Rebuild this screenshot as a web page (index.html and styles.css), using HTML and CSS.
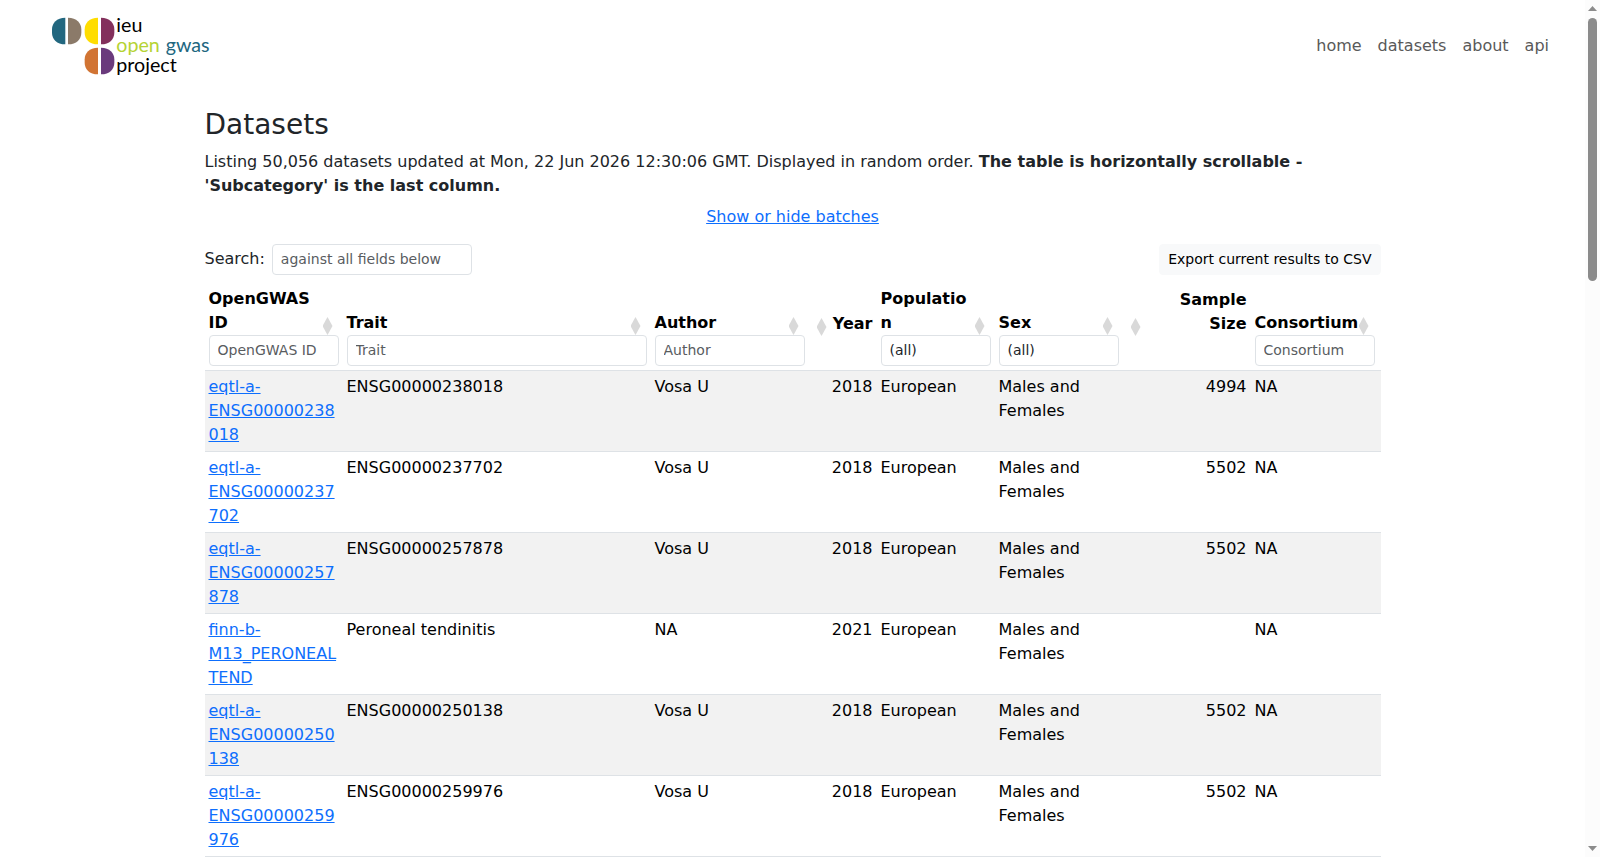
FILE: index.html
```html
<!DOCTYPE html>
<html lang="en">
<head>
  <meta charset="UTF-8">
  <meta name="viewport" content="width=device-width, initial-scale=1.0">
  <title>Datasets</title>
  <link rel="stylesheet" href="styles.css">
</head>
<body>
  <div class="page">
    <header class="navbar">
      <a href="#" class="brand">
        <svg class="logo" width="200" height="92" viewBox="0 0 600 276">
          <path fill="#22677f" d="M76 53C50 53 36 69 36 88V98C36 117 50 133 76 133Z"/>
          <path fill="#8b7a69" d="M84 53C110 53 124 69 124 88V98C124 117 110 133 84 133Z"/>
          <path fill="#ffdd00" d="M174 53C148 53 134 69 134 88V98C134 117 148 133 174 133Z"/>
          <path fill="#83305c" d="M183 53C209 53 223 69 223 88V98C223 117 209 133 183 133Z"/>
          <path fill="#d17433" d="M174 143C148 143 134 159 134 178V188C134 207 148 223 174 223Z"/>
          <path fill="#6a3a7c" d="M183 143C209 143 223 159 223 178V188C223 207 209 223 183 223Z"/>
          <text class="logo-text" x="229" y="97">ieu</text>
          <text class="logo-text logo-green" x="229" y="156">open</text>
          <text class="logo-text logo-blue" x="377" y="156">gwas</text>
          <text class="logo-text" x="229" y="215">project</text>
        </svg>
      </a>
      <nav class="menu">
        <a href="#">home</a>
        <a href="#">datasets</a>
        <a href="#">about</a>
        <a href="#">api</a>
      </nav>
    </header>

    <main class="container">
      <h2>Datasets</h2>
      <p>Listing 50,056 datasets updated at Mon, 22 Jun 2026 12:30:06 GMT. Displayed in random order. <b>The table is horizontally scrollable - 'Subcategory' is the last column.</b></p>
      <div class="batches"><a href="#">Show or hide batches</a></div>

      <div class="toolbar">
        <div class="search">
          <label for="search">Search:</label>
          <input type="text" id="search" class="field" placeholder="against all fields below">
        </div>
        <button type="button" class="export">Export current results to CSV</button>
      </div>

      <table class="datasets">
        <colgroup>
          <col class="col-id">
          <col class="col-trait">
          <col class="col-author">
          <col class="col-year">
          <col class="col-population">
          <col class="col-sex">
          <col class="col-size">
          <col class="col-consortium">
        </colgroup>
        <thead>
          <tr>
            <th><div class="title"><label for="f-id">OpenGWAS ID</label><span class="sort"></span></div><input type="text" id="f-id" class="field" placeholder="OpenGWAS ID"></th>
            <th><div class="title"><label for="f-trait">Trait</label><span class="sort"></span></div><input type="text" id="f-trait" class="field" placeholder="Trait"></th>
            <th><div class="title"><label for="f-author">Author</label><span class="sort"></span></div><input type="text" id="f-author" class="field" placeholder="Author"></th>
            <th class="num"><div class="title">Year<span class="sort"></span></div></th>
            <th><div class="title"><label for="f-population">Population</label><span class="sort"></span></div><select id="f-population" class="field"><option>(all)</option></select></th>
            <th><div class="title"><label for="f-sex">Sex</label><span class="sort"></span></div><select id="f-sex" class="field"><option>(all)</option></select></th>
            <th class="num"><div class="title">Sample Size<span class="sort"></span></div></th>
            <th class="last"><div class="title"><label for="f-consortium">Consortium</label><span class="sort"></span></div><input type="text" id="f-consortium" class="field" placeholder="Consortium"></th>
          </tr>
        </thead>
        <tbody>
          <tr>
            <td><a href="#">eqtl-a-ENSG00000238018</a></td>
            <td>ENSG00000238018</td>
            <td>Vosa U</td>
            <td class="num">2018</td>
            <td>European</td>
            <td>Males and Females</td>
            <td class="num">4994</td>
            <td>NA</td>
          </tr>
          <tr>
            <td><a href="#">eqtl-a-ENSG00000237702</a></td>
            <td>ENSG00000237702</td>
            <td>Vosa U</td>
            <td class="num">2018</td>
            <td>European</td>
            <td>Males and Females</td>
            <td class="num">5502</td>
            <td>NA</td>
          </tr>
          <tr>
            <td><a href="#">eqtl-a-ENSG00000257878</a></td>
            <td>ENSG00000257878</td>
            <td>Vosa U</td>
            <td class="num">2018</td>
            <td>European</td>
            <td>Males and Females</td>
            <td class="num">5502</td>
            <td>NA</td>
          </tr>
          <tr>
            <td><a href="#">finn-b-M13_PERONEALTEND</a></td>
            <td>Peroneal tendinitis</td>
            <td>NA</td>
            <td class="num">2021</td>
            <td>European</td>
            <td>Males and Females</td>
            <td class="num"></td>
            <td>NA</td>
          </tr>
          <tr>
            <td><a href="#">eqtl-a-ENSG00000250138</a></td>
            <td>ENSG00000250138</td>
            <td>Vosa U</td>
            <td class="num">2018</td>
            <td>European</td>
            <td>Males and Females</td>
            <td class="num">5502</td>
            <td>NA</td>
          </tr>
          <tr>
            <td><a href="#">eqtl-a-ENSG00000259976</a></td>
            <td>ENSG00000259976</td>
            <td>Vosa U</td>
            <td class="num">2018</td>
            <td>European</td>
            <td>Males and Females</td>
            <td class="num">5502</td>
            <td>NA</td>
          </tr>
        </tbody>
      </table>
    </main>
  </div>

  <div class="scrollbar" aria-hidden="true">
    <svg width="9" height="5" viewBox="0 0 18 10"><path d="M0 10 9 0 18 10Z"/></svg>
    <div class="track"><div class="thumb"></div></div>
    <svg width="9" height="5" viewBox="0 0 18 10"><path d="M0 0 9 10 18 0Z"/></svg>
  </div>
</body>
</html>
```
FILE: styles.css
```css
* {
  box-sizing: border-box;
}

body {
  display: flex;
  height: 100vh;
  margin: 0;
  overflow: hidden;
  font-family: "DejaVu Sans", sans-serif;
  font-size: 16px;
  line-height: 24px;
  color: #212529;
  background: #fff;
}

a {
  color: #0d6efd;
}

.page {
  flex: 1;
  overflow: hidden;
}

/* Header */
.navbar {
  display: flex;
  align-items: center;
  justify-content: space-between;
  padding: 0 28px 0 40px;
}

.logo {
  display: block;
}

.logo-text {
  font-family: Lato, sans-serif;
  font-size: 59px;
  fill: #000;
}

.logo-green {
  fill: #b5d334;
}

.logo-blue {
  fill: #22677f;
}

.menu {
  display: flex;
}

.menu a {
  padding: 8px;
  color: #595959;
  text-decoration: none;
}

/* Content */
.container {
  max-width: 1176px;
  margin: 0 auto;
  padding-top: 16px;
}

h2 {
  margin: 0 0 8px;
  font-size: 28px;
  font-weight: 500;
  line-height: 34px;
}

p {
  margin: 0;
}

.batches {
  padding: 7px 0;
  text-align: center;
}

.toolbar {
  display: flex;
  align-items: center;
  justify-content: space-between;
  margin: 8px 0;
}

.search {
  display: flex;
  gap: 7px;
}

.search .field {
  width: 200px;
}

.search label {
  padding-top: 3px;
}

.field {
  display: block;
  width: 100%;
  height: 31px;
  margin: 0;
  padding: 4px 8px;
  border: 1px solid #dee2e6;
  border-radius: 4px;
  background: #fff;
  color: #212529;
  font-family: inherit;
  font-size: 14px;
  line-height: 21px;
  appearance: none;
}

input.field {
  padding: 3px 8px 5px;
}

.field::placeholder {
  color: #595c5f;
  opacity: 1;
}

.export {
  height: 31px;
  padding: 4px 8px;
  border: 1px solid #f8f9fa;
  border-radius: 4px;
  background: #f8f9fa;
  color: #000;
  font-family: inherit;
  font-size: 14px;
  line-height: 21px;
}

/* Table */
.datasets {
  width: 100%;
  table-layout: fixed;
  border-collapse: separate;
  border-spacing: 0;
  color: #000;
}

.col-id { width: 138px; }
.col-trait { width: auto; }
.col-author { width: 158px; }
.col-year { width: 68px; }
.col-population { width: 118px; }
.col-sex { width: 128px; }
.col-size { width: 128px; }
.col-consortium { width: 130px; }

th,
td {
  padding: 4px;
  border-bottom: 1px solid #dee2e6;
  text-align: left;
  vertical-align: top;
  overflow-wrap: anywhere;
}

th {
  vertical-align: bottom;
}

tbody tr:nth-child(odd) {
  background: #f2f2f2;
}

.num {
  text-align: right;
}

th.num {
  padding-bottom: 34px;
}

th.last {
  padding-right: 6px;
}

.title {
  position: relative;
  padding-right: 18px;
}

.num .title {
  padding-right: 0;
  padding-left: 16px;
}

.last .title {
  padding-right: 0;
}

/* Up and down sort arrows */
.sort {
  position: absolute;
  right: 6px;
  bottom: 0;
  width: 10px;
  height: 18px;
  background: #d9d9d9;
  clip-path: polygon(50% 0, 100% 50%, 50% 100%, 0 50%);
}

.num .sort {
  right: auto;
  left: 4px;
}

/* Scrollbar */
.scrollbar {
  display: flex;
  flex-direction: column;
  align-items: center;
  gap: 7px;
  width: 15px;
  padding: 6px 0;
  background: #fcfcfc;
  fill: #8b8b8b;
}

.track {
  flex: 1;
  width: 9px;
}

.thumb {
  height: 32%;
  border-radius: 5px;
  background: #8b8b8b;
}
```
